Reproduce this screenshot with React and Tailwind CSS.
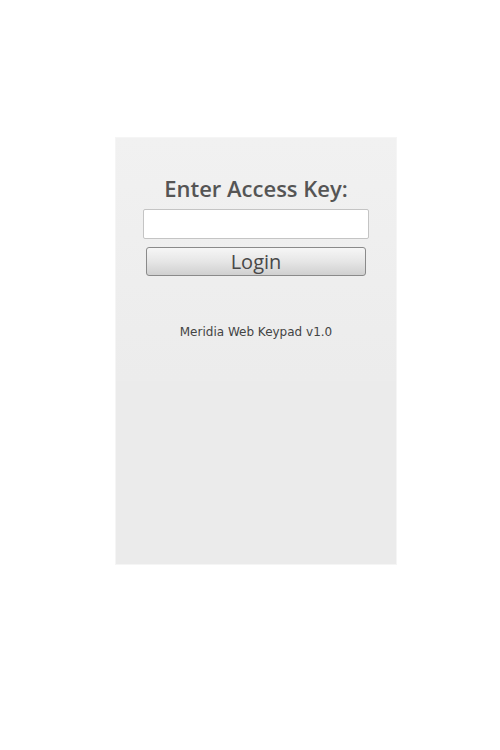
import React from "react";

const App = () => {
    return (
        <div className="w-[500px] h-[750px] bg-white pt-[137px] pl-[115px]">
            <div className="w-[282px] h-[428px] bg-[#ebebeb] border border-[#f5f5f5] flex flex-col">
                <div className="h-[243px] bg-gradient-to-b from-[#f1f1f1] to-[#ececec] flex flex-col items-center">
                    <h1
                        className="mt-[37px] text-[22px] leading-[26px] font-semibold text-[#555555]"
                        style={{ fontFamily: '"Open Sans", "DejaVu Sans", sans-serif' }}
                    >
                        Enter Access Key:
                    </h1>
                    <input
                        type="text"
                        className="mt-[8px] w-[226px] h-[30px] bg-white border border-[#c4c4c4] rounded-[2px] outline-none"
                    />
                    <button
                        className="mt-[8px] w-[220px] h-[29px] rounded-[3px] border border-[#8a8a8a] bg-gradient-to-b from-[#f6f6f6] via-[#e6e6e6] to-[#d0d0d0] text-[20px] leading-[26px] font-medium text-[#484848]"
                        style={{ fontFamily: '"Open Sans", "DejaVu Sans", sans-serif' }}
                    >
                        Login
                    </button>
                    <p
                        className="mt-[49px] text-[12px] leading-[14px] text-[#444444]"
                        style={{ fontFamily: '"DejaVu Sans", Verdana, sans-serif' }}
                    >
                        Meridia Web Keypad v1.0
                    </p>
                </div>
            </div>
        </div>
    );
};

export default App;
